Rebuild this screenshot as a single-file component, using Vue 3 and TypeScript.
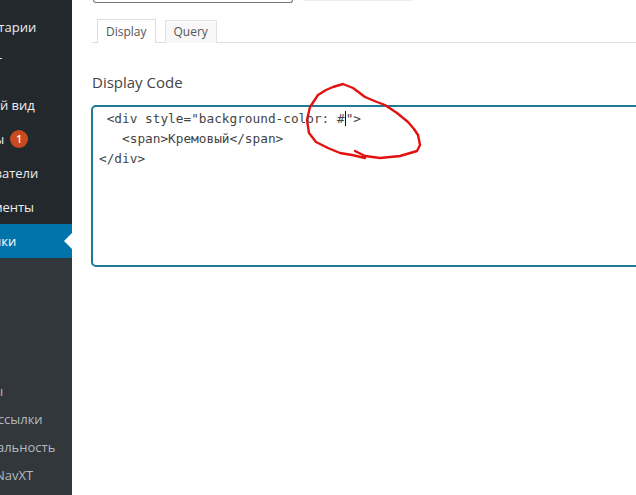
<script setup lang="ts">
const mainMenu = [
  { label: 'Комментарии', cls: 'first' },
  { label: 'Внешний вид', cls: 'gap' },
  { label: 'Плагины', badge: '1' },
  { label: 'Пользователи' },
  { label: 'Инструменты' },
  { label: 'Настройки', cls: 'current' },
]
const subMenu = ['Медиафайлы', 'Постоянные ссылки', 'Конфиденциальность', 'Breadcrumb NavXT']
</script>

<template>
  <div class="page">
    <aside class="sidebar">
      <ul class="menu">
        <template v-for="m in mainMenu" :key="m.label">
          <li v-if="m.cls === 'gap'" class="tick"></li>
          <li class="item" :class="m.cls">
            <span>{{ m.label }}</span>
            <b v-if="m.badge" class="badge">{{ m.badge }}</b>
          </li>
        </template>
      </ul>
      <ul class="sub">
        <li v-for="s in subMenu" :key="s">{{ s }}</li>
      </ul>
    </aside>
    <main class="content">
      <div class="top">
        <div class="input"></div>
        <div class="ghost"></div>
      </div>
      <nav class="tabs">
        <span class="tab active">Display</span>
        <span class="tab">Query</span>
      </nav>
      <h2>Display Code</h2>
      <div class="editor">
        <pre class="code"> <span>&lt;div style="background-color: #<i class="caret"></i>"&gt;</span>
   &lt;span&gt;Кремовый&lt;/span&gt;
&lt;/div&gt;</pre>
      </div>
    </main>
    <svg class="scribble" viewBox="0 0 636 495" width="636" height="495">
      <path d="M365 158L352 155L340 153L328 148L316 142L309 133L307 120L310 107L318 95L326 90L333 87L343 84L353 88L365 97L377 102L385 105L397 113L408 122L414 129L418 135L420 145L417 151L400 156L380 158L365 156L355 151" />
    </svg>
  </div>
</template>

<style>
html, body { margin: 0; background: #fff; }
</style>

<style scoped>
.page { position: relative; display: flex; width: 636px; height: 495px; overflow: hidden; font-family: "Open Sans", sans-serif; }
.sidebar { width: 72px; height: 495px; flex: none; overflow: hidden; background: #32373c; }
.menu, .sub { list-style: none; margin: 0 0 0 -88px; padding: 0; width: 160px; }
.menu { background: #23282d; padding-top: 10px; height: 258px; box-sizing: border-box; }
.item { display: flex; align-items: center; gap: 6px; height: 34px; padding-left: 36px; font-size: 13px; color: #eee; white-space: nowrap; }
.tick { width: 2px; height: 1px; margin: 14px 0 29px 88px; background: #ddd; }
.item.current { position: relative; background: #0073aa; color: #fff; }
.item.current::after { content: ""; position: absolute; right: 0; top: 9px; border: 8px solid transparent; border-right-color: #fff; border-left-width: 0; }
.badge { display: inline-flex; align-items: center; justify-content: center; width: 18px; height: 18px; border-radius: 50%; background: #ca4a1f; color: #fff; font-size: 10px; font-weight: 600; }
.sub { margin-top: 119px; margin-left: -120px; }
.sub li { height: 28px; line-height: 28px; padding-left: 36px; font-size: 13px; color: #b4b9be; white-space: nowrap; }
.sub li:first-child { padding-left: 39px; }
.content { flex: 1; min-width: 0; padding-left: 20px; }
.top { display: flex; gap: 10px; height: 4px; }
.input { width: 200px; height: 3px; box-sizing: border-box; margin-left: 1px; border: 1px solid #777; border-top: 0; border-radius: 0 0 4px 4px; }
.ghost { width: 110px; height: 1px; background: #eee; }
.tabs { display: flex; gap: 9px; height: 39px; padding-left: 5px; box-sizing: border-box; border-bottom: 1px solid #ddd; align-items: flex-end; }
.tab { height: 22px; line-height: 22px; padding: 0 8px; margin-bottom: -1px; border: 1px solid #e3e3e3; border-bottom: 0; background: #f8f8f8; font-size: 12px; color: #555; }
.tab.active { height: 23px; line-height: 24px; background: #fff; border-color: #ddd; }
h2 { margin: 29px 0 0; font-size: 15px; line-height: 20px; font-weight: 400; color: #444; }
.editor { width: 560px; height: 162px; margin-top: 13px; margin-left: -1px; box-sizing: border-box; border: 2px solid #1f7a97; border-radius: 5px; padding: 2px 0 0 6px; }
.code { margin: 0; font-family: "DejaVu Sans Mono", monospace; font-size: 12.75px; line-height: 20px; color: #444; }
.caret { display: inline-block; width: 1px; height: 15px; vertical-align: -3px; background: #111; }
.scribble { position: absolute; inset: 0; pointer-events: none; }
.scribble path { fill: none; stroke: #e3120f; stroke-width: 2.4; stroke-linecap: round; stroke-linejoin: round; }
</style>
